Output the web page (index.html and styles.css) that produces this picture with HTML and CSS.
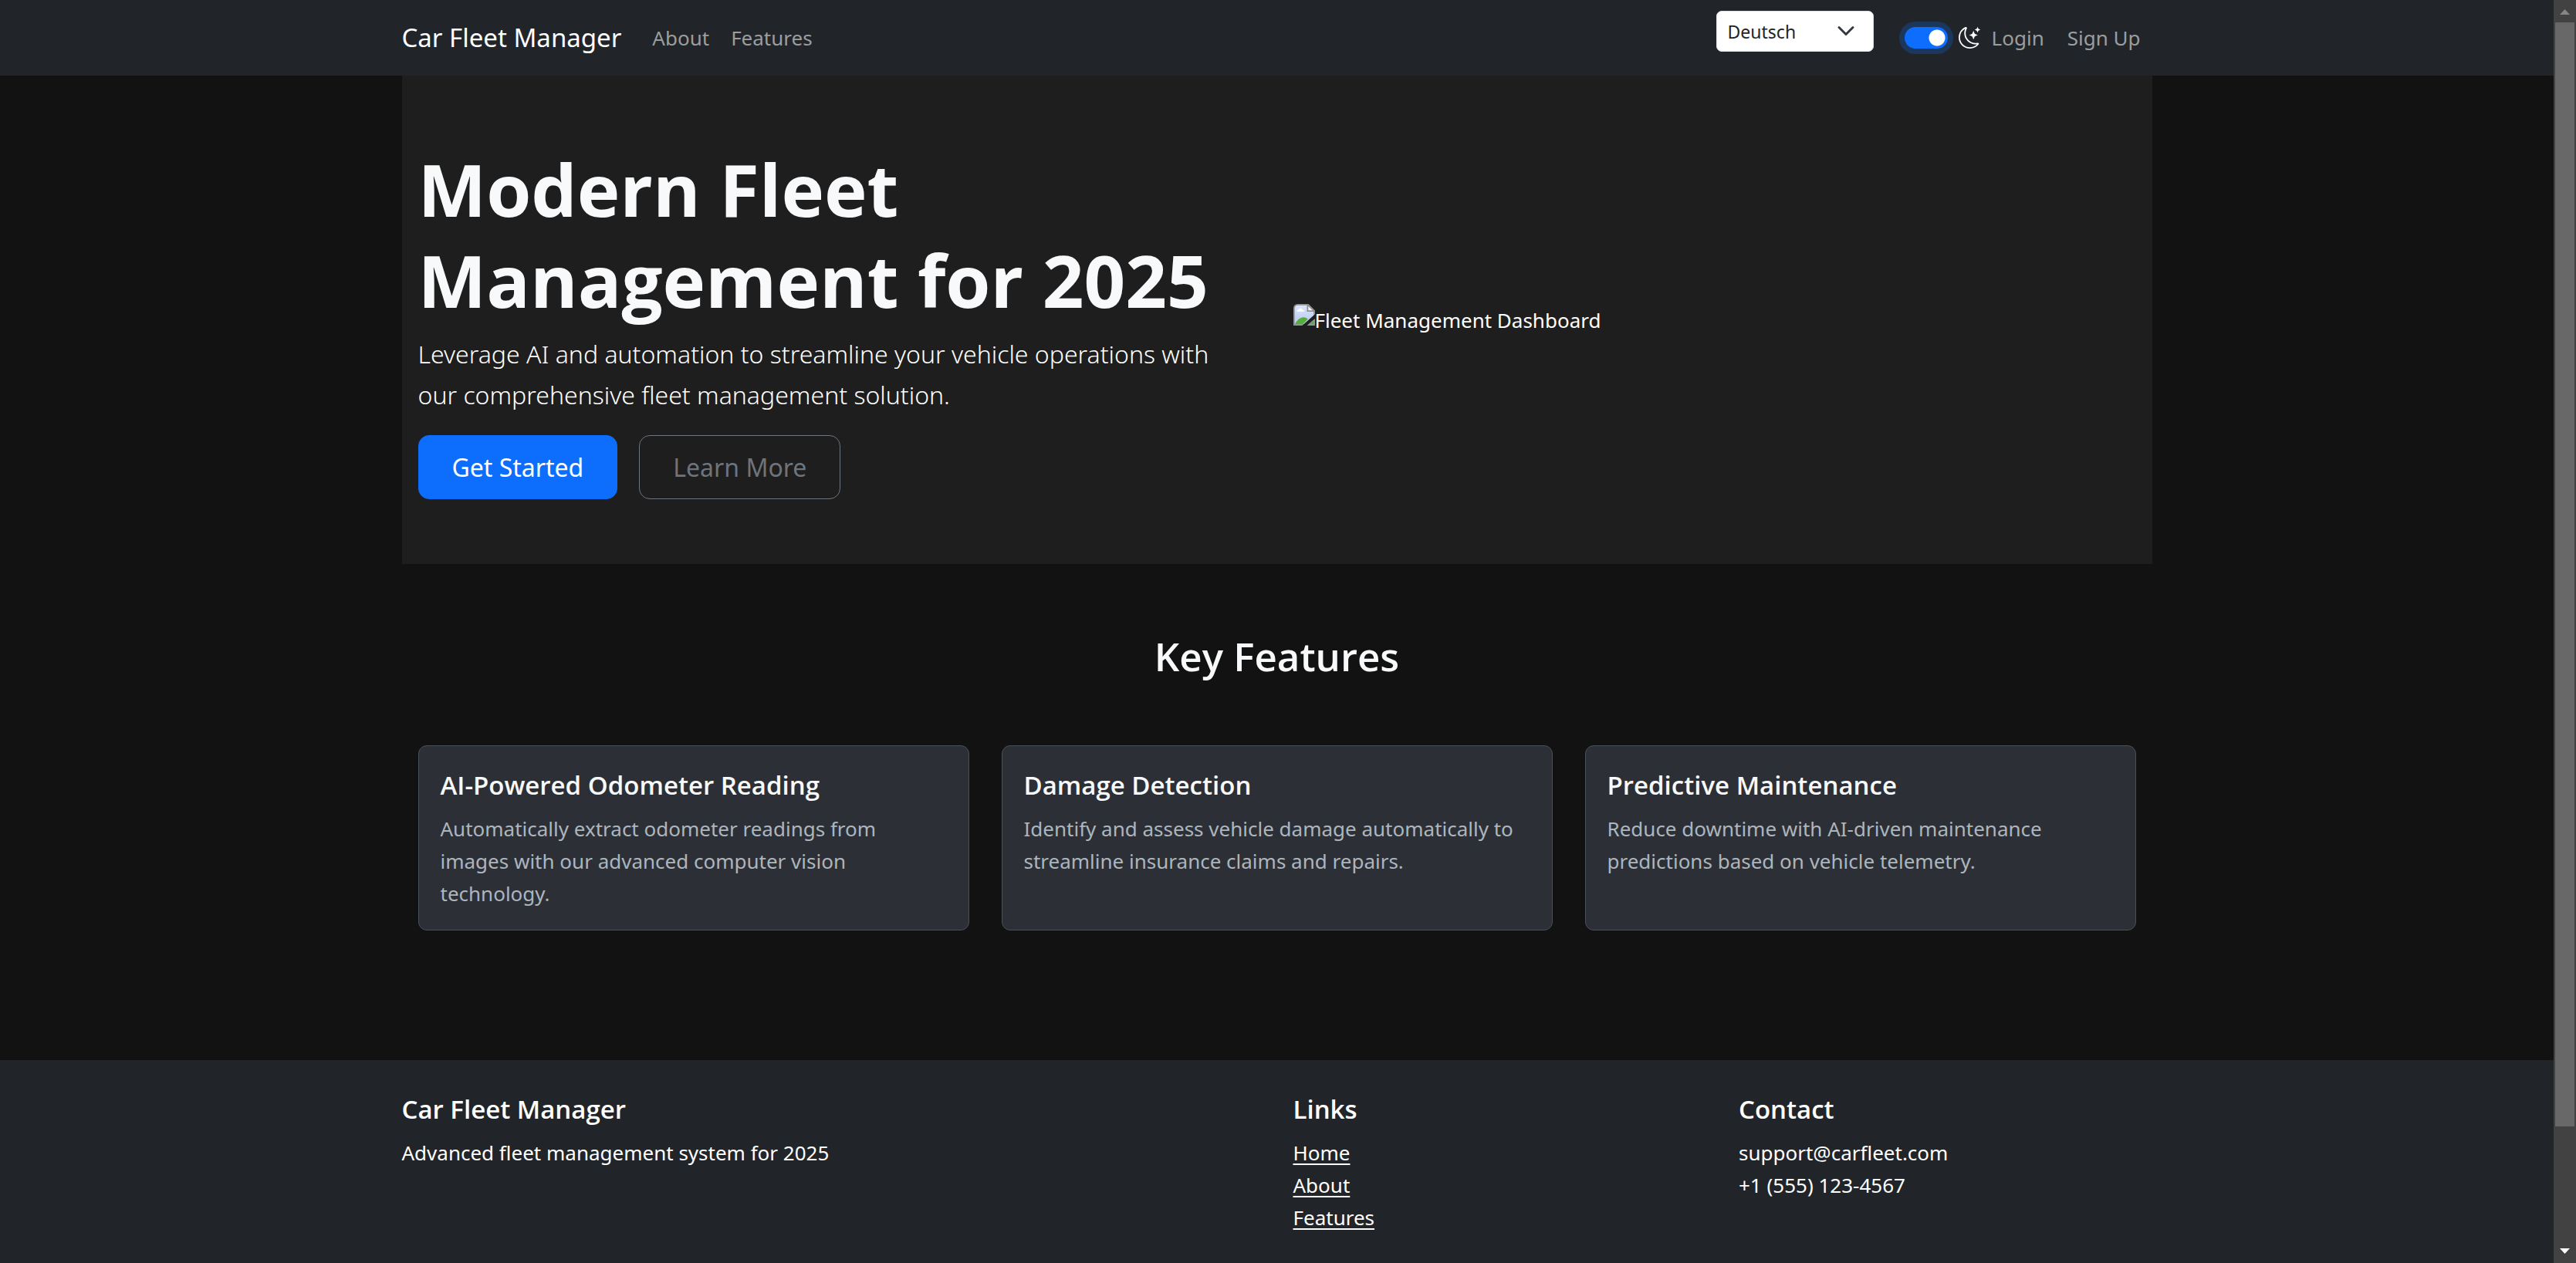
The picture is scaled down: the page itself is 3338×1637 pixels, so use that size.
FILE: index.html
```html
<!DOCTYPE html>
<html lang="en">
<head>
<meta charset="utf-8">
<meta name="viewport" content="width=device-width, initial-scale=1">
<title>Car Fleet Manager</title>
<link rel="stylesheet" href="styles.css">
</head>
<body>
<div class="shell">
  <div class="page">
    <header class="navbar">
      <div class="container navbar-inner">
        <a class="brand" href="#">Car Fleet Manager</a>
        <nav class="nav-links" aria-label="Main">
          <a href="#about">About</a>
          <a href="#features">Features</a>
        </nav>
        <div class="language">
          <select class="language-select" aria-label="Language">
            <option selected>Deutsch</option>
            <option>English</option>
          </select>
          <svg class="chevron" viewBox="0 0 16 16" fill="none" stroke="#343a40" stroke-width="2" stroke-linecap="round" stroke-linejoin="round" aria-hidden="true"><path d="m2 5 6 6 6-6"/></svg>
        </div>
        <label class="theme">
          <input class="switch" type="checkbox" role="switch" aria-label="Dark mode" checked>
          <svg class="moon" viewBox="0 0 16 16" fill="currentColor" aria-hidden="true"><path d="M6 .278a.77.77 0 0 1 .08.858 7.2 7.2 0 0 0-.878 3.46c0 4.021 3.278 7.277 7.318 7.277q.792-.001 1.533-.16a.79.79 0 0 1 .81.316.73.73 0 0 1-.031.893A8.35 8.35 0 0 1 8.344 16C3.734 16 0 12.286 0 7.71 0 4.266 2.114 1.312 5.124.06A.75.75 0 0 1 6 .278M4.858 1.311A7.27 7.27 0 0 0 1.025 7.71c0 4.02 3.279 7.276 7.319 7.276a7.32 7.32 0 0 0 5.205-2.162q-.506.063-1.029.063c-4.61 0-8.343-3.714-8.343-8.29 0-1.167.242-2.278.681-3.286"/><path d="M10.794 3.148a.217.217 0 0 1 .412 0l.387 1.162c.173.518.579.924 1.097 1.097l1.162.387a.217.217 0 0 1 0 .412l-1.162.387a1.73 1.73 0 0 0-1.097 1.097l-.387 1.162a.217.217 0 0 1-.412 0l-.387-1.162A1.73 1.73 0 0 0 9.31 6.593l-1.162-.387a.217.217 0 0 1 0-.412l1.162-.387a1.73 1.73 0 0 0 1.097-1.097zM13.863.099a.145.145 0 0 1 .274 0l.258.774c.115.346.386.617.732.732l.774.258a.145.145 0 0 1 0 .274l-.774.258a1.16 1.16 0 0 0-.732.732l-.258.774a.145.145 0 0 1-.274 0l-.258-.774a1.16 1.16 0 0 0-.732-.732l-.774-.258a.145.145 0 0 1 0-.274l.774-.258c.346-.115.617-.386.732-.732z"/></svg>
        </label>
        <nav class="nav-links account" aria-label="Account">
          <a href="#login">Login</a>
          <a href="#signup">Sign Up</a>
        </nav>
      </div>
    </header>

    <main class="container">
      <section class="hero">
        <div class="hero-copy">
          <h1>Modern Fleet Management for 2025</h1>
          <p class="lead">Leverage AI and automation to streamline your vehicle operations with our comprehensive fleet management solution.</p>
          <div class="actions">
            <button class="btn btn-primary" type="button">Get Started</button>
            <button class="btn btn-outline" type="button">Learn More</button>
          </div>
        </div>
        <div class="hero-image">
          <svg class="missing-image" viewBox="0 0 16 16" aria-hidden="true">
            <defs><linearGradient id="sky" x1="0" y1="0" x2="0" y2="1"><stop offset="0" stop-color="#dce6fa"/><stop offset="1" stop-color="#b4c8f0"/></linearGradient></defs>
            <path d="M3 .5h8L15.500 5v10.500H.5V3A2.500 2.500 0 0 1 3 .5z" fill="url(#sky)" stroke="#8f8f8f"/>
            <path d="M2.500 5.600a1.300 1.300 0 0 1 1.200-1.400 1.600 1.600 0 0 1 3 .1 1 1 0 0 1 1.200 1.300z" fill="#fff"/>
            <path d="M1 15c1.500-3 4-5.200 6.500-5.200 1.400 0 2.400.6 3.200 1.400L7 15z" fill="#56ad3a"/>
            <path d="m11.500 15 3.500-3v3z" fill="#56ad3a"/>
            <path d="M10.500 .5v4.700h5z" fill="#f4f4f4" stroke="#8f8f8f"/>
            <path d="M16 7.500v3.300L10 16H6.500z" fill="#1e1e1e"/>
          </svg>
          <span>Fleet Management Dashboard</span>
        </div>
      </section>

      <section class="features" id="features">
        <h2>Key Features</h2>
        <div class="cards">
          <article class="card">
            <h3>AI-Powered Odometer Reading</h3>
            <p>Automatically extract odometer readings from images with our advanced computer vision technology.</p>
          </article>
          <article class="card">
            <h3>Damage Detection</h3>
            <p>Identify and assess vehicle damage automatically to streamline insurance claims and repairs.</p>
          </article>
          <article class="card">
            <h3>Predictive Maintenance</h3>
            <p>Reduce downtime with AI-driven maintenance predictions based on vehicle telemetry.</p>
          </article>
        </div>
      </section>
    </main>

    <footer class="footer">
      <div class="container footer-grid">
        <section class="footer-about">
          <h3>Car Fleet Manager</h3>
          <p>Advanced fleet management system for 2025</p>
        </section>
        <section>
          <h3>Links</h3>
          <ul>
            <li><a href="#">Home</a></li>
            <li><a href="#about">About</a></li>
            <li><a href="#features">Features</a></li>
          </ul>
        </section>
        <section>
          <h3>Contact</h3>
          <p>support@carfleet.com</p>
          <p>+1 (555) 123-4567</p>
        </section>
      </div>
    </footer>
  </div>

  <div class="scrollbar" aria-hidden="true">
    <svg class="arrow" viewBox="0 0 29 29"><path d="M8 19 14.500 12 21 19z" fill="#868686"/></svg>
    <div class="track"><div class="thumb"></div></div>
    <svg class="arrow" viewBox="0 0 29 29"><path d="M8 10h13l-6.500 7z" fill="#fff"/></svg>
  </div>
</div>
</body>
</html>
```
FILE: styles.css
```css
*, *::before, *::after { box-sizing: border-box; }

body {
  margin: 0;
  background: #121212;
  color: #fff;
  font-family: "Noto Sans", "Open Sans", sans-serif;
  font-size: 26px;
  line-height: 42px;
}

h1, h2, h3, p, ul { margin: 0; padding: 0; }
h1, h2, h3 { font-family: "Open Sans", "Noto Sans", sans-serif; font-weight: 600; }
h3 { font-size: 33px; line-height: 42px; margin-bottom: 14px; }
ul { list-style: none; }

.shell { display: flex; height: 100vh; overflow: hidden; }
.page { flex: 1; min-width: 0; display: flex; flex-direction: column; overflow: hidden; }
.container { width: 100%; max-width: 2310px; margin: 0 auto; padding: 0 21px; }

/* Navigation */
.navbar { background: #212529; padding: 14px 0; }
.navbar-inner { display: flex; align-items: center; min-height: 70px; }
.brand { color: #fff; font-size: 33px; text-decoration: none; margin-right: 26px; }
.nav-links { display: flex; }
.nav-links a { color: #9b9d9e; text-decoration: none; padding: 0 14px; }
.nav-links.account a { padding: 0 15px; }

.language { position: relative; align-self: flex-start; margin-left: auto; margin-right: 40px; }
.language-select {
  display: block;
  width: 204px;
  height: 53px;
  padding: 0 60px 0 14px;
  appearance: none;
  border: 1px solid #dee2e6;
  border-radius: 7px;
  background: #fff;
  color: #212529;
  font-family: inherit;
  font-size: 23px;
}
.chevron { position: absolute; right: 24px; top: 14px; width: 24px; height: 24px; pointer-events: none; }

.theme { display: flex; align-items: center; gap: 14px; }
.switch {
  appearance: none;
  width: 56px;
  height: 28px;
  margin: 0;
  border-radius: 14px;
  background: radial-gradient(circle at 42px 14px, #fff 10px, #0d6efd 11px);
  box-shadow: 0 0 0 7px rgba(13, 110, 253, .25);
}
.moon { width: 28px; height: 28px; }

/* Hero */
.hero {
  display: grid;
  grid-template-columns: 1fr 1fr;
  gap: 42px;
  align-items: center;
  padding: 84px 21px;
  background: #1e1e1e;
}
h1 { color: #f8f9fa; font-size: 94px; font-weight: 700; line-height: 118px; padding-top: 4px; margin-bottom: 10px; }
.lead { font-size: 32px; font-weight: 300; line-height: 53px; padding-right: 42px; margin-bottom: 26px; }
.actions { display: flex; gap: 28px; }
.btn {
  height: 83px;
  padding: 0 43px;
  border: 1px solid #6c757d;
  border-radius: 14px;
  background: transparent;
  color: #6c757d;
  font-family: inherit;
  font-size: 32px;
}
.btn-primary { background: #0d6efd; border-color: #0d6efd; color: #fff; }
.hero-image { display: flex; }
.missing-image { width: 28px; height: 28px; }

/* Features */
.features { padding: 86px 21px 84px; }
h2 { color: #f8f9fa; font-size: 51px; line-height: 67px; text-align: center; margin-bottom: 82px; }
.cards { display: grid; grid-template-columns: repeat(3, 1fr); gap: 42px; }
.card { padding: 30px 28px 26px; background: #2c3036; border: 1px solid #495057; border-radius: 11px; color: #adb5bd; }
.card h3 { color: #f8f9fa; }

/* Footer */
.footer { flex: 1 0 auto; margin-top: 84px; padding: 43px 0; background: #212529; }
.footer-grid { display: grid; grid-template-columns: repeat(4, 1fr); gap: 42px; }
.footer-about { grid-column: span 2; }
.footer a { color: #fff; text-underline-offset: 4px; text-decoration-thickness: 2px; }

/* Window scrollbar */
.scrollbar { flex: none; width: 29px; display: flex; flex-direction: column; background: #424242; }
.arrow { display: block; flex: none; width: 29px; height: 29px; }
.track { flex: 1; padding: 0 2px; }
.thumb { height: 90.6%; background: #686868; }
```
